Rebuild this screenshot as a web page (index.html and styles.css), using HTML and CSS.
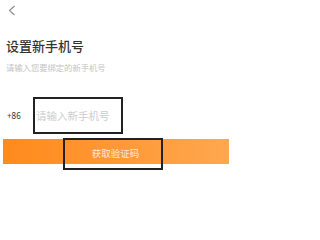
FILE: index.html
```html
<!DOCTYPE html>
<html lang="zh-CN">
<head>
<meta charset="utf-8">
<link rel="stylesheet" href="styles.css">
</head>
<body>
<div class="page">
  <div class="nav">
    <svg class="back" width="8" height="11" viewBox="0 0 8 11"><polyline points="6.5,1 1.5,5.5 6.5,10" fill="none" stroke="#8a8a8a" stroke-width="1.1"/></svg>
  </div>
  <h1 class="title">设置新手机号</h1>
  <p class="subtitle">请输入您要绑定的新手机号</p>
  <div class="phone-row">
    <span class="code">+86</span>
    <input class="phone-input" type="text" placeholder="请输入新手机号">
  </div>
  <div class="bar">
    <div class="label">获取验证码</div>
  </div>
</div>
</body>
</html>
```
FILE: styles.css
```css
html, body {
  margin: 0;
  padding: 0;
  background: #ffffff;
}
body {
  font-family: "Noto Sans CJK SC", "Noto Sans", sans-serif;
  width: 233px;
  height: 216px;
  overflow: hidden;
}
.page {
  display: flex;
  flex-direction: column;
}
.nav {
  height: 38px;
  padding-left: 8px;
  padding-top: 5px;
  box-sizing: border-box;
}
.back {
  display: block;
}
.title {
  margin: 0 0 0 6px;
  font-size: 13px;
  line-height: 16px;
  font-weight: 500;
  color: #333333;
}
.subtitle {
  margin: 8px 0 0 6px;
  font-size: 8.3px;
  line-height: 11px;
  color: #c4c4c4;
}
.phone-row {
  margin-top: 24px;
  display: flex;
  align-items: center;
  height: 37px;
}
.code {
  width: 26px;
  padding-left: 7px;
  font-size: 8px;
  line-height: 10px;
  color: #333333;
  font-family: "Noto Sans", sans-serif;
}
.phone-input {
  width: 90px;
  height: 37px;
  box-sizing: border-box;
  border: 2px solid #222222;
  margin: 0;
  padding: 0 0 0 1px;
  font-family: "Noto Sans CJK SC", sans-serif;
  font-size: 10.5px;
  outline: none;
  background: #ffffff;
}
.phone-input::placeholder {
  color: #cdcdcd;
}
.bar {
  margin: 5px 4px 0 3px;
  height: 25px;
  display: flex;
  align-items: flex-start;
  padding-left: 60px;
  background: linear-gradient(90deg, #ff8a1c 0%, #ff9a38 55%, #ffa74f 100%);
}
.label {
  margin-top: -1px;
  width: 100px;
  height: 32px;
  box-sizing: border-box;
  border: 2px solid #222222;
  display: flex;
  align-items: center;
  justify-content: center;
  padding: 0 0 3px 5px;
  font-size: 9.5px;
  color: rgba(255, 255, 255, 0.8);
}
```
